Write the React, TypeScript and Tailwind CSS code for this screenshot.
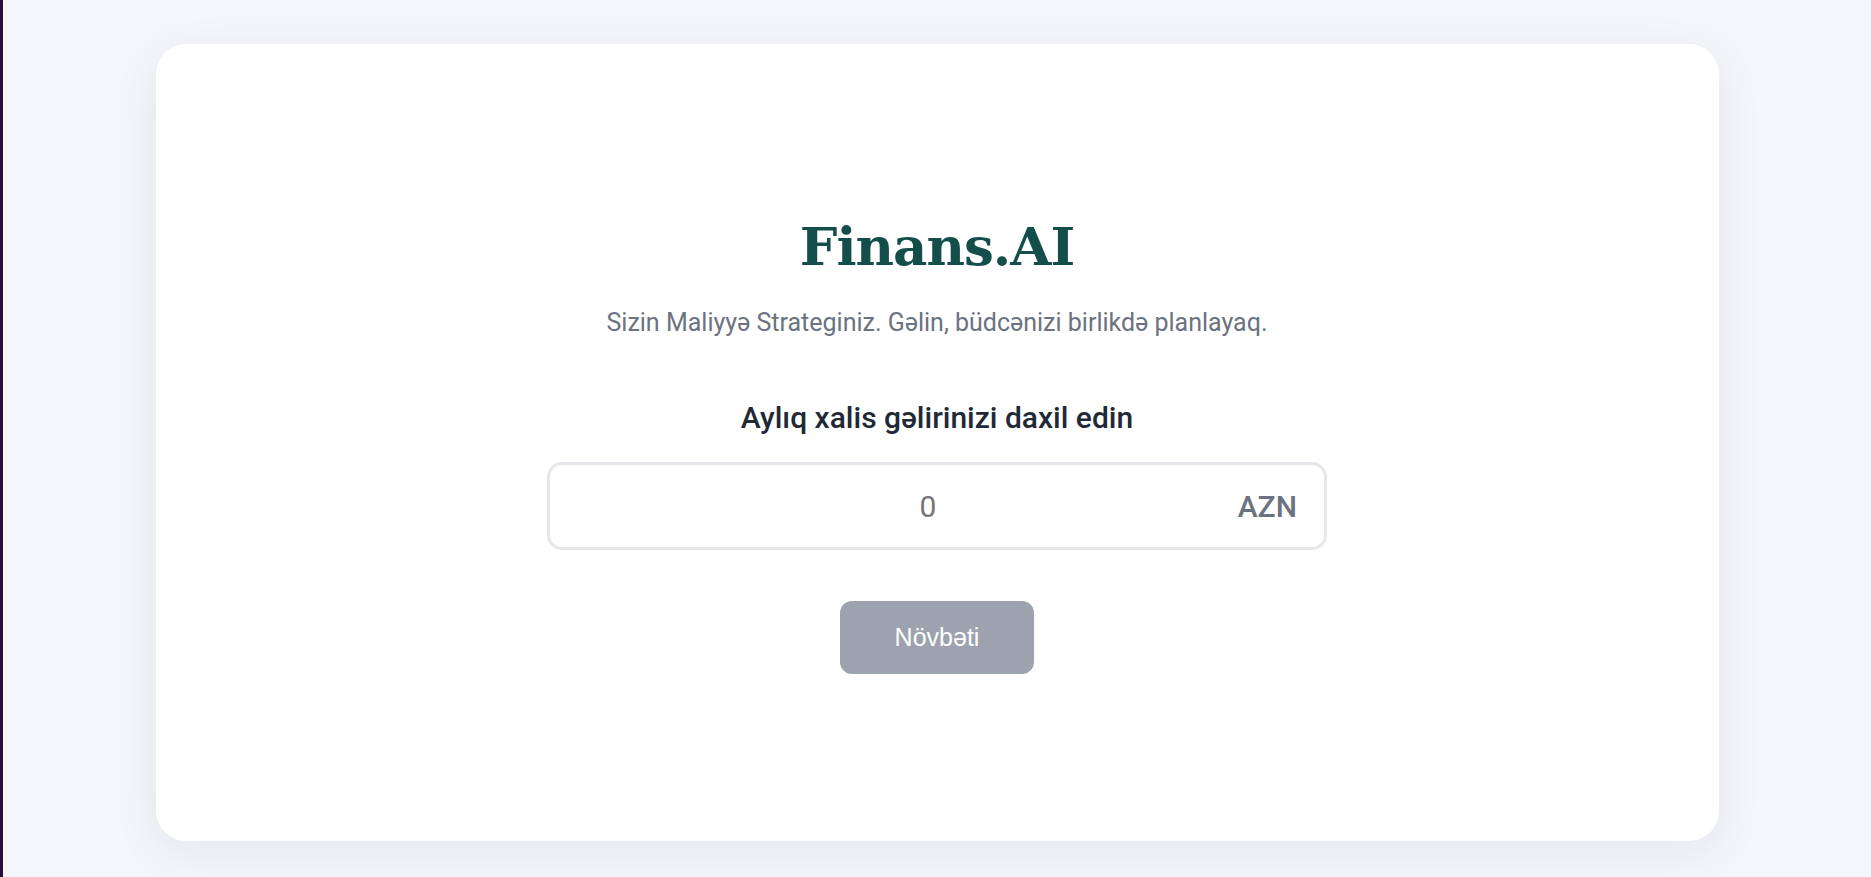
import { useState } from "react";

export default function App() {
  const [income, setIncome] = useState("");

  return (
    <div className="min-h-[877px] bg-[#f5f6fa] border-l-[3px] border-[#2a0d3a] flex justify-center pt-[44px] pb-[36px] font-['Roboto',sans-serif]">
      {/* Card */}
      <div className="w-[1563px] h-[797px] bg-white rounded-[30px] shadow-[0_12px_48px_rgba(30,35,60,0.07)] flex flex-col items-center pt-[172px]">
        <h1 className="font-['DejaVu_Serif',serif] font-bold text-[53px] leading-[60px] tracking-[-1px] text-[#134e4a]">
          Finans.AI
        </h1>
        <p className="mt-[32px] text-[25px] leading-[30px] text-[#6b7280]">
          Sizin Maliyyə Strateginiz. Gəlin, büdcənizi birlikdə planlayaq.
        </p>

        <label className="mt-[62px] text-[30px] leading-[36px] font-medium text-[#1f2937]">
          Aylıq xalis gəlirinizi daxil edin
        </label>

        {/* Income input */}
        <div className="relative mt-[26px] w-[780px] h-[88px]">
          <input
            type="text"
            value={income}
            onChange={(e) => setIncome(e.target.value)}
            placeholder="0"
            className="w-full h-full rounded-[15px] border-[3px] border-[#e5e7eb] bg-white pl-[25px] pr-[43px] text-center text-[30px] text-[#374151] placeholder:text-[#757575] outline-none font-['Roboto',sans-serif]"
          />
          <span className="absolute right-[30px] top-1/2 -translate-y-1/2 text-[30px] font-medium text-[#6b7280]">
            AZN
          </span>
        </div>

        <button className="mt-[51px] w-[194px] h-[73px] rounded-[12px] bg-[#9ca3af] text-white text-[25px] font-['Liberation_Sans',sans-serif]">
          Növbəti
        </button>
      </div>
    </div>
  );
}
